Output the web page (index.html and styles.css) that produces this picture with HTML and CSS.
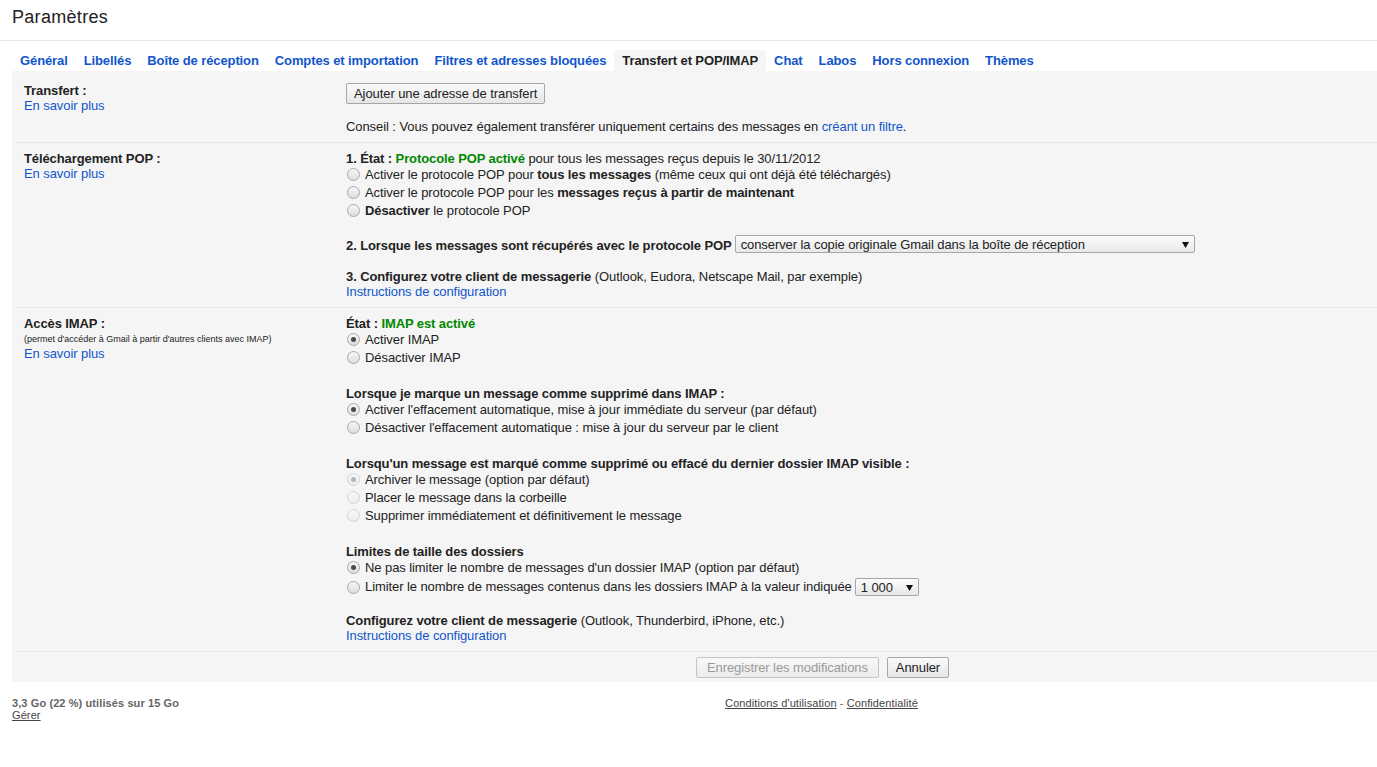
FILE: index.html
```html
<!DOCTYPE html>
<html lang="fr">
<head>
<meta charset="utf-8">
<title>Paramètres</title>
<link rel="stylesheet" href="styles.css">
</head>
<body>
<header class="header">
  <h1 class="title">Paramètres</h1>
</header>
<nav class="tabs">
  <a class="tab">Général</a>
  <a class="tab">Libellés</a>
  <a class="tab">Boîte de réception</a>
  <a class="tab">Comptes et importation</a>
  <a class="tab">Filtres et adresses bloquées</a>
  <a class="tab tab-active">Transfert et POP/IMAP</a>
  <a class="tab">Chat</a>
  <a class="tab">Labos</a>
  <a class="tab">Hors connexion</a>
  <a class="tab">Thèmes</a>
</nav>
<main class="panel">
  <section class="row">
    <div class="label-col">
      <div class="label">Transfert :</div>
      <a class="link">En savoir plus</a>
    </div>
    <div class="content-col">
      <button class="btn btn-first">Ajouter une adresse de transfert</button>
      <div class="line tip">Conseil : Vous pouvez également transférer uniquement certains des messages en <a class="link">créant un filtre</a>.</div>
    </div>
  </section>

  <section class="row">
    <div class="label-col">
      <div class="label">Téléchargement POP :</div>
      <a class="link">En savoir plus</a>
    </div>
    <div class="content-col">
      <div class="line"><b>1. État : <span class="ok">Protocole POP activé</span></b> pour tous les messages reçus depuis le 30/11/2012</div>
      <div class="opt"><span class="radio"></span>Activer le protocole POP pour&nbsp;<b>tous les messages</b>&nbsp;(même ceux qui ont déjà été téléchargés)</div>
      <div class="opt"><span class="radio"></span>Activer le protocole POP pour les&nbsp;<b>messages reçus à partir de maintenant</b></div>
      <div class="opt"><span class="radio"></span><b>Désactiver</b>&nbsp;le protocole POP</div>
      <div class="opt-select sel-gap"><b class="sel-label">2. Lorsque les messages sont récupérés avec le protocole POP</b><span class="select select-wide"><span class="select-text">conserver la copie originale Gmail dans la boîte de réception</span><svg class="arrow" width="7" height="6" viewBox="0 0 7 6"><path d="M0 0H7L3.5 6Z" fill="#111"/></svg></span></div>
      <div class="line gap-s"><b>3. Configurez votre client de messagerie</b> (Outlook, Eudora, Netscape Mail, par exemple)</div>
      <a class="line link block">Instructions de configuration</a>
    </div>
  </section>

  <section class="row">
    <div class="label-col">
      <div class="label">Accès IMAP :</div>
      <div class="small">(permet d'accéder à Gmail à partir d'autres clients avec IMAP)</div>
      <a class="link">En savoir plus</a>
    </div>
    <div class="content-col">
      <div class="line"><b>État : <span class="ok">IMAP est activé</span></b></div>
      <div class="opt"><span class="radio checked"></span>Activer IMAP</div>
      <div class="opt"><span class="radio"></span>Désactiver IMAP</div>

      <div class="line gap-l"><b>Lorsque je marque un message comme supprimé dans IMAP :</b></div>
      <div class="opt"><span class="radio checked"></span>Activer l'effacement automatique, mise à jour immédiate du serveur (par défaut)</div>
      <div class="opt"><span class="radio"></span>Désactiver l'effacement automatique : mise à jour du serveur par le client</div>

      <div class="line gap-l"><b>Lorsqu'un message est marqué comme supprimé ou effacé du dernier dossier IMAP visible :</b></div>
      <div class="opt"><span class="radio checked disabled"></span>Archiver le message (option par défaut)</div>
      <div class="opt"><span class="radio disabled"></span>Placer le message dans la corbeille</div>
      <div class="opt"><span class="radio disabled"></span>Supprimer immédiatement et définitivement le message</div>

      <div class="line gap-l"><b>Limites de taille des dossiers</b></div>
      <div class="opt"><span class="radio checked"></span>Ne pas limiter le nombre de messages d'un dossier IMAP (option par défaut)</div>
      <div class="opt opt-tall"><span class="radio"></span>Limiter le nombre de messages contenus dans les dossiers IMAP à la valeur indiquée<span class="select select-small"><span class="select-text">1 000</span><svg class="arrow" width="7" height="6" viewBox="0 0 7 6"><path d="M0 0H7L3.5 6Z" fill="#111"/></svg></span></div>

      <div class="line gap-m"><b>Configurez votre client de messagerie</b> (Outlook, Thunderbird, iPhone, etc.)</div>
      <a class="line link block">Instructions de configuration</a>
    </div>
  </section>

  <div class="actions">
    <button class="btn btn-save">Enregistrer les modifications</button>
    <button class="btn btn-cancel">Annuler</button>
  </div>
</main>
<footer class="footer">
  <div class="storage">
    <div class="usage">3,3 Go (22 %) utilisés sur 15 Go</div>
    <a class="foot-link">Gérer</a>
  </div>
  <div class="legal">
    <a class="foot-link">Conditions d'utilisation</a> - <a class="foot-link">Confidentialité</a>
  </div>
</footer>
</body>
</html>
```
FILE: styles.css
```css
* { box-sizing: border-box; }
html, body { margin: 0; padding: 0; background: #fff; }
body {
  font-family: "Liberation Sans", Arial, sans-serif;
  font-size: 13px;
  letter-spacing: -0.08px;
  color: #222;
  width: 1377px;
}
b { font-weight: bold; letter-spacing: -0.1px; }
a { cursor: pointer; }

.header {
  height: 41px;
  padding: 6px 0 0 12px;
  border-bottom: 1px solid #e5e5e5;
}
.title {
  margin: 0;
  font-size: 18px;
  font-weight: normal;
  line-height: 22px;
  letter-spacing: 0.3px;
  color: #222;
}

.tabs {
  display: flex;
  margin-top: 9px;
  padding-left: 12px;
  height: 21px;
}
.tab {
  padding: 0 8px;
  line-height: 21px;
  font-weight: bold;
  letter-spacing: -0.105px;
  color: #15c;
  white-space: nowrap;
}
.tab-active {
  color: #222;
  background: #f5f5f5;
}

.panel {
  margin-left: 12px;
  background: #f5f5f5;
  padding-top: 4px;
}
.row {
  display: flex;
  margin: 0 0 0 4px;
  padding: 7px 0 9px 8px;
  border-bottom: 1px solid #e5e5e5;
}
.label-col {
  width: 322px;
  flex: none;
  padding-top: 1px;
  line-height: 15px;
}
.label { font-weight: bold; letter-spacing: -0.1px; }
.small {
  font-size: 9px;
  letter-spacing: 0;
  line-height: 15px;
  height: 15px;
  padding-top: 1px;
}
.link { color: #15c; text-decoration: none; }
.label-col .link { display: block; }
.block { display: block; }

.content-col { flex: 1; }
.line {
  line-height: 15px;
  height: 15px;
  padding-top: 1px;
  white-space: nowrap;
}
.ok { color: #080; }
.tip { margin-top: 14px; }
.gap-l { margin-top: 19px; }
.gap-m { margin-top: 15px; }
.gap-s { margin-top: 14px; }
.sel-gap { margin-top: 15px; }

.opt {
  display: flex;
  align-items: center;
  height: 18px;
  white-space: nowrap;
}
.opt-tall { height: 21px; }
.opt-select {
  display: flex;
  align-items: center;
  height: 20px;
  white-space: nowrap;
}
.sel-label { padding-top: 2px; line-height: 15px; }

.radio {
  flex: none;
  width: 13px;
  height: 13px;
  margin: 1px 5px 0 1px;
  border-radius: 50%;
  border: 1px solid #a9a9a9;
  background: linear-gradient(#f6f6f6, #dedede);
  display: flex;
  align-items: center;
  justify-content: center;
}
.radio.checked::after {
  content: "";
  width: 5px;
  height: 5px;
  border-radius: 50%;
  background: #4a4a4a;
}
.radio.disabled {
  border-color: #d3d3d3;
  background: linear-gradient(#f7f7f7, #ececec);
}
.radio.disabled.checked::after { background: #b5b5b5; }

.select {
  display: inline-flex;
  align-items: center;
  justify-content: space-between;
  height: 18px;
  margin-left: 3px;
  padding: 2px 5px 0 5px;
  border: 1px solid #a6a6a6;
  border-radius: 2px;
  background: linear-gradient(#fbfbfb, #e8e8e8);
  color: #222;
}
.select-wide { width: 460px; }
.select-small { width: 64px; }
.select-text { line-height: 16px; }
.arrow { flex: none; }

.btn {
  font-family: "Liberation Sans", Arial, sans-serif;
  font-size: 13px;
  letter-spacing: -0.08px;
  color: #222;
  height: 21px;
  padding: 0 7px;
  border: 1px solid #a6a6a6;
  border-radius: 2px;
  background: linear-gradient(#fafafa, #e6e6e6);
  line-height: 19px;
  white-space: nowrap;
}
.btn-first { display: block; margin-top: 1px; }
.btn-save {
  padding: 0 10px;
  color: #9a9a9a;
  border-color: #c4c4c4;
  background: linear-gradient(#f8f8f8, #ececec);
}
.btn-cancel { padding: 0 8px; }

.actions {
  display: flex;
  justify-content: center;
  gap: 8px;
  padding: 5px 0 4px 256px;
}

.footer {
  display: flex;
  padding: 15px 0 0 12px;
  font-size: 11px;
  letter-spacing: 0.1px;
  line-height: 12px;
  color: #666;
}
.storage { width: 254px; flex: none; }
.usage { font-weight: bold; }
.legal { flex: 1; text-align: center; }
.foot-link { color: #444; text-decoration: underline; }
```
